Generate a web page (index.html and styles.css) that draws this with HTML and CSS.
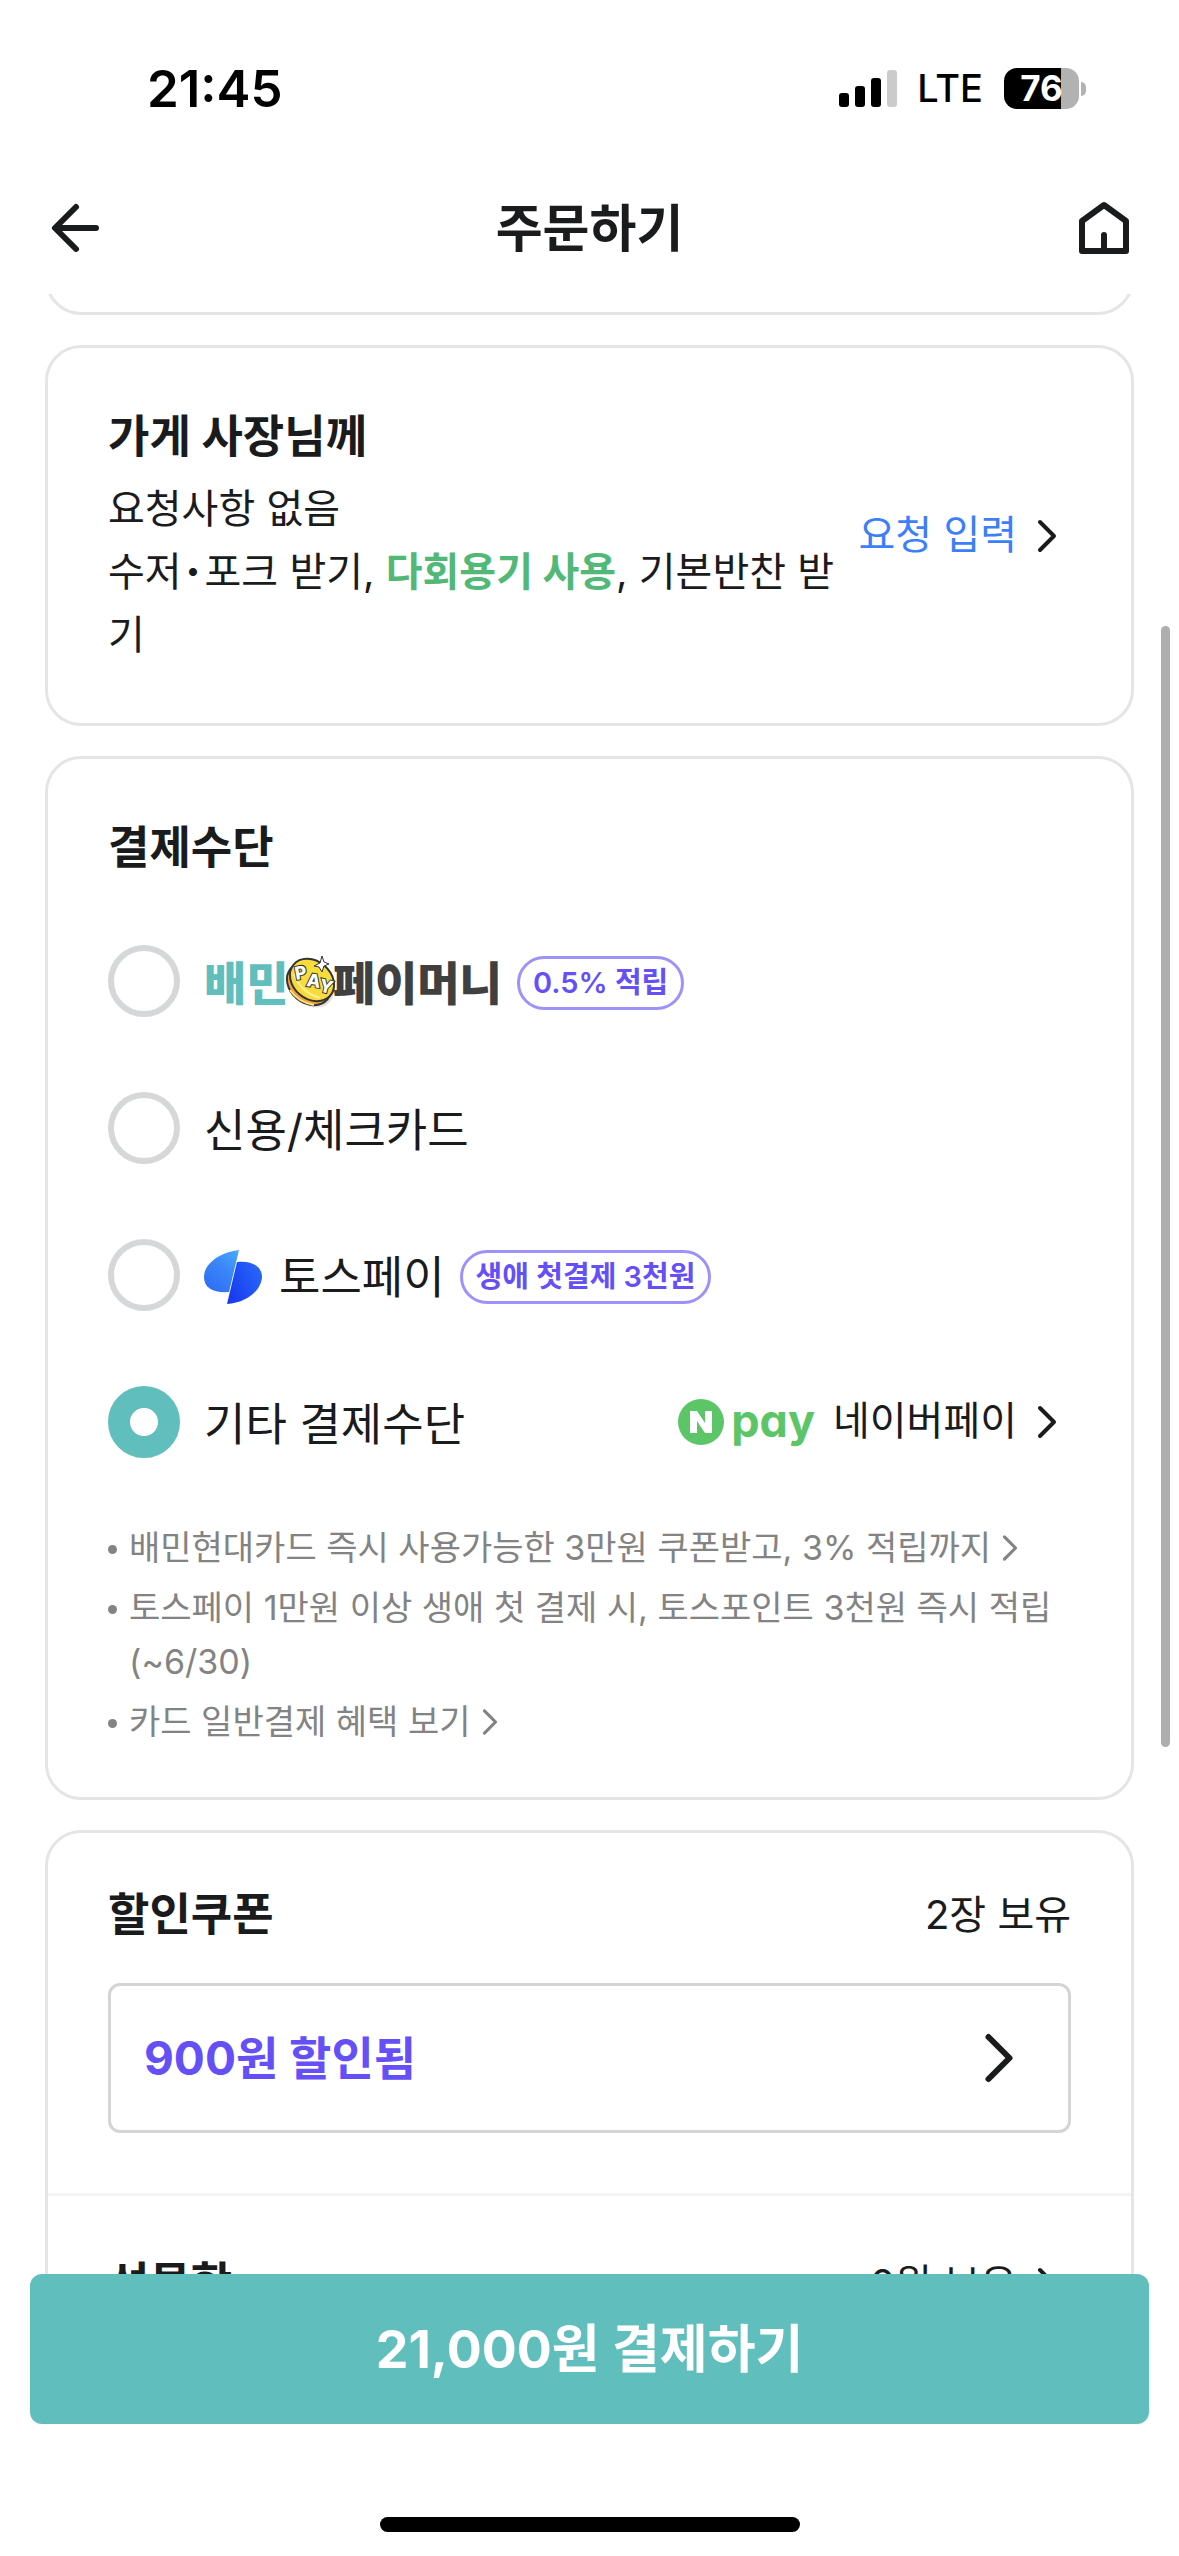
FILE: index.html
```html
<!DOCTYPE html>
<html lang="ko">
<head>
<meta charset="utf-8">
<meta name="viewport" content="width=device-width, initial-scale=1">
<title>주문하기</title>
<link rel="stylesheet" href="styles.css">
</head>
<body>
<svg class="sprite" aria-hidden="true">
  <symbol id="chevron" viewBox="0 0 48 48">
    <path d="M17 10 L31 24 L17 38" fill="none" stroke="currentColor" stroke-width="4" stroke-linecap="round" stroke-linejoin="round"/>
  </symbol>
</svg>
<div class="screen">
  <div class="status-bar">
    <time class="clock">21:45</time>
    <div class="status-icons">
      <svg class="signal" viewBox="0 0 58 38" aria-hidden="true">
        <rect x="0" y="23" width="10" height="14" rx="3"/>
        <rect x="16" y="16" width="10" height="21" rx="3"/>
        <rect x="32" y="8" width="10" height="29" rx="3"/>
        <rect x="48" y="0" width="10" height="37" rx="3" fill="#cbcbcb"/>
      </svg>
      <span class="network">LTE</span>
      <div class="battery"><span class="battery-level">76</span><span class="battery-tip"></span></div>
    </div>
  </div>

  <header class="app-bar">
    <button class="icon-button" type="button" aria-label="뒤로">
      <svg class="icon-nav" viewBox="0 0 54 54" aria-hidden="true">
        <path d="M28 6 L7 27 L28 48 M8 27 H48" fill="none" stroke="currentColor" stroke-width="6" stroke-linecap="round" stroke-linejoin="round"/>
      </svg>
    </button>
    <h1 class="app-title">주문하기</h1>
    <button class="icon-button" type="button" aria-label="홈">
      <svg class="icon-nav" viewBox="0 0 54 54" aria-hidden="true">
        <path d="M5 50 V20 L27 4 L49 20 V50 Z M27 34 V49" fill="none" stroke="currentColor" stroke-width="6" stroke-linecap="round" stroke-linejoin="round"/>
      </svg>
    </button>
  </header>

  <main class="content">
    <section class="card card-previous"></section>

    <section class="card request">
      <div class="request-body">
        <h2 class="card-title">가게 사장님께</h2>
        <p class="request-text">요청사항 없음</p>
        <p>수저<span class="dot">·</span>포크 받기, <strong class="eco">다회용기 사용</strong>, 기본반찬 받기</p>
      </div>
      <a class="request-link" href="#"><span class="blue">요청 입력</span><svg class="icon" aria-hidden="true"><use href="#chevron"/></svg></a>
    </section>

    <section class="card payment">
      <h2 class="card-title">결제수단</h2>
      <div class="methods">
        <div class="method">
          <label class="method-label">
            <input class="radio" type="radio" name="pay">
            <span class="method-name"><span class="baemin"><span class="baemin-mint">배민</span><svg class="coin" viewBox="0 0 52 54" aria-hidden="true">
              <ellipse cx="27" cy="32" rx="22" ry="18" transform="rotate(35 27 32)" fill="#000" opacity=".12"/>
              <ellipse cx="23" cy="28" rx="24" ry="19" transform="rotate(40 23 28)" fill="#f0a03c" stroke="#333" stroke-width="2"/>
              <path d="M4 34 Q12 46 28 49" fill="none" stroke="#ffe27a" stroke-width="2"/>
              <ellipse cx="26" cy="24" rx="24" ry="19" transform="rotate(40 26 24)" fill="#f8dc3c" stroke="#333" stroke-width="2"/>
              <path d="M8 18 Q14 36 34 42" fill="none" stroke="#fff09a" stroke-width="2"/>
              <g class="coin-text">
                <text x="10" y="24" transform="rotate(-10 10 24)">P</text>
                <text x="20" y="30" transform="rotate(8 20 30)">A</text>
                <text x="32" y="35" transform="rotate(14 32 35)">Y</text>
              </g>
              <path d="M36 0 L38 6 L43 8 L38 10 L36 16 L33 11 L28 10 L34 7 Z" fill="#fff" stroke="#333" stroke-width="1"/>
            </svg><span class="baemin-dark">페이머니</span></span>
            <span class="badge">0.5% 적립</span></span>
          </label>
        </div>
        <div class="method">
          <label class="method-label">
            <input class="radio" type="radio" name="pay">
            <span class="method-name">신용/체크카드</span>
          </label>
        </div>
        <div class="method">
          <label class="method-label">
            <input class="radio" type="radio" name="pay">
            <span class="method-name"><span class="toss"><svg class="toss-icon" viewBox="0 0 58 54" aria-hidden="true">
              <defs>
                <linearGradient id="toss-left" x1="1" y1="0" x2=".3" y2="1"><stop offset="0" stop-color="#4aaaff"/><stop offset=".5" stop-color="#3a86f7"/><stop offset="1" stop-color="#2f70f5"/></linearGradient>
                <linearGradient id="toss-right" x1="1" y1="0" x2="0" y2=".6"><stop offset="0" stop-color="#2b6bfa"/><stop offset="1" stop-color="#183df0"/></linearGradient>
              </defs>
              <path d="M33 12 C48 10 58 17 58 27 C57 41 42 53 23 54 Z" fill="url(#toss-right)"/>
              <path d="M35 0 C17 2 0 13 0 27 C0 38 9 43 25 42 Z" fill="url(#toss-left)"/>
            </svg><span>토스페이</span></span>
            <span class="badge">생애 첫결제 3천원</span></span>
          </label>
        </div>
        <div class="method">
          <label class="method-label">
            <input class="radio" type="radio" name="pay" checked>
            <span class="method-name">기타 결제수단</span>
          </label>
          <a class="naver" href="#">
            <span class="npay"><svg class="npay-icon" viewBox="0 0 46 46" aria-hidden="true">
              <circle cx="23" cy="23" r="23" fill="#5bc567"/>
              <path d="M12 12 H19 L27 24 V12 H34 V34 H27 L19 22 V34 H12 Z" fill="#fff"/>
            </svg><span class="npay-word">pay</span></span>
            <span class="naver-name">네이버페이</span>
            <svg class="icon" aria-hidden="true"><use href="#chevron"/></svg>
          </a>
        </div>
      </div>
      <ul class="notes">
        <li><a class="note-link" href="#">배민현대카드 즉시 사용가능한 3만원 쿠폰받고, 3% 적립까지<svg class="icon-small" aria-hidden="true"><use href="#chevron"/></svg></a></li>
        <li>토스페이 1만원 이상 생애 첫 결제 시, 토스포인트 3천원 즉시 적립(~6/30)</li>
        <li><a class="note-link" href="#">카드 일반결제 혜택 보기<svg class="icon-small" aria-hidden="true"><use href="#chevron"/></svg></a></li>
      </ul>
    </section>

    <section class="card benefits">
      <div class="coupon">
        <div class="row">
          <h2 class="card-title">할인쿠폰</h2>
          <span>2장 보유</span>
        </div>
        <button class="coupon-select" type="button">
          <span>900원 할인됨</span>
          <svg class="icon-large" aria-hidden="true"><use href="#chevron"/></svg>
        </button>
      </div>
      <div class="gift row">
        <h2 class="card-title">선물함</h2>
        <a class="gift-link" href="#">0원 보유<svg class="icon" aria-hidden="true"><use href="#chevron"/></svg></a>
      </div>
    </section>
    <div class="scrollbar"></div>
  </main>

  <footer class="bottom-bar">
    <button class="pay-button" type="button">21,000원 결제하기</button>
    <div class="home-indicator"></div>
  </footer>
</div>
</body>
</html>
```
FILE: styles.css
```css
* {
  box-sizing: border-box;
}

body {
  margin: 0;
  background: #fff;
  color: #1a1b1c;
  font-family: Inter, "Noto Sans CJK KR", sans-serif;
  font-size: 40px;
  line-height: 63px;
}

h1, h2, p, ul {
  margin: 0;
  padding: 0;
}

button {
  padding: 0;
  border: 0;
  background: none;
  color: inherit;
  font: inherit;
}

a {
  color: inherit;
  text-decoration: none;
}

svg {
  display: block;
  flex: none;
}

.sprite {
  position: absolute;
  width: 0;
  height: 0;
}

.screen {
  display: flex;
  flex-direction: column;
  height: 100vh;
}

/* Status bar */
.status-bar {
  display: flex;
  flex: none;
  align-items: flex-start;
  justify-content: space-between;
  height: 162px;
  padding: 57px 93px 0 147px;
  color: #000;
}

.clock {
  font-size: 51px;
  font-weight: 600;
}

.status-icons {
  display: flex;
  align-items: center;
  height: 63px;
}

.signal {
  width: 58px;
  height: 38px;
  margin-right: 20px;
}

.network {
  margin-right: 21px;
  font-size: 38px;
  font-weight: 500;
}

.battery {
  display: flex;
  align-items: center;
  gap: 2px;
}

.battery-level {
  width: 75px;
  height: 41px;
  border-radius: 13px;
  background: linear-gradient(to right, #000 76%, #b2b2b2 76%);
  color: #fff;
  font-size: 35px;
  font-weight: 700;
  line-height: 41px;
  text-align: center;
}

.battery-tip {
  width: 5px;
  height: 14px;
  border-radius: 0 5px 5px 0;
  background: #b2b2b2;
}

/* App bar */
.app-bar {
  display: flex;
  flex: none;
  align-items: center;
  justify-content: space-between;
  height: 132px;
  padding: 0 48px;
}

.app-title {
  font-size: 51px;
  font-weight: 700;
}

.icon-nav {
  width: 54px;
  height: 54px;
}

/* Cards */
.content {
  position: relative;
  display: flex;
  flex: 1;
  flex-direction: column;
  gap: 30px;
  min-height: 0;
  padding: 0 45px;
  overflow: hidden;
}

.card {
  flex: none;
  padding: 0 60px;
  border: 3px solid #e4e5e5;
  border-radius: 36px;
}

.card-previous {
  height: 81px;
  margin-top: -60px;
}

.card-title {
  font-size: 45px;
  font-weight: 700;
}

.icon {
  width: 48px;
  height: 48px;
}

.request {
  display: flex;
  align-items: center;
  gap: 12px;
  padding-top: 57px;
  padding-bottom: 57px;
}

.request-body {
  flex: 1;
}

.request-text {
  padding-top: 9px;
}

.dot {
  margin: 0 4px;
  font-weight: 900;
}

.eco {
  color: #52b878;
  font-weight: 700;
}

.request-link,
.gift-link {
  display: flex;
  align-items: center;
  gap: 6px;
}

.blue {
  padding-bottom: 3px;
  color: #3c7ffa;
}

/* Payment methods */
.payment {
  padding-top: 57px;
  padding-bottom: 48px;
}

.methods {
  display: flex;
  flex-direction: column;
  gap: 75px;
  padding-top: 66px;
}

.method {
  display: flex;
  align-items: center;
  justify-content: space-between;
}

.method-label {
  display: flex;
  align-items: center;
  font-size: 45px;
}

.method-name {
  display: flex;
  align-items: center;
  padding-top: 4px;
}

.radio {
  appearance: none;
  flex: none;
  width: 72px;
  height: 72px;
  margin: 0 24px 0 0;
  border: 6px solid #d5d7d9;
  border-radius: 50%;
  background: #fff;
}

.radio:checked {
  border: 22px solid #60bebd;
}

.baemin,
.toss,
.npay {
  display: flex;
  align-items: center;
}

.baemin {
  font-size: 46px;
  font-weight: 900;
}

.baemin-mint {
  color: #60bebd;
}

.baemin-dark {
  color: #404040;
}

.coin {
  position: relative;
  width: 52px;
  height: 54px;
  margin: 0 -5px 0 -3px;
  overflow: visible;
}

.coin-text {
  fill: #fff;
  stroke: #333;
  stroke-width: 2px;
  paint-order: stroke;
  font-size: 18px;
  font-weight: 800;
}

.badge {
  margin-left: 15px;
  padding: 0 13px;
  border: 3px solid #9c92fa;
  border-radius: 27px;
  color: #6450f6;
  font-size: 29px;
  font-weight: 600;
  line-height: 48px;
}

.toss {
  gap: 17px;
}

.toss-icon {
  width: 58px;
  height: 54px;
}

.naver {
  display: flex;
  align-items: center;
}

.npay {
  gap: 7px;
}

.npay-icon {
  width: 46px;
  height: 46px;
}

.npay-word {
  padding-bottom: 3px;
  color: #5bc567;
  font-size: 45px;
  font-weight: 700;
  line-height: 60px;
  font-feature-settings: "cv11";
}

.naver-name {
  margin: 0 6px 0 18px;
  padding-bottom: 3px;
}

.notes {
  display: flex;
  flex-direction: column;
  gap: 6px;
  padding-top: 63px;
  color: #838383;
  font-size: 34px;
  line-height: 54px;
  list-style: none;
}

.notes li {
  display: flex;
  gap: 12px;
}

.notes li::before {
  flex: none;
  width: 9px;
  height: 9px;
  margin-top: 24px;
  border-radius: 50%;
  background: #838383;
  content: "";
}

.note-link {
  display: flex;
  align-items: center;
}

.icon-small {
  width: 38px;
  height: 38px;
}

/* Coupon and gifts */
.benefits {
  padding: 0;
}

.row {
  display: flex;
  align-items: center;
  justify-content: space-between;
}

.coupon {
  padding: 50px 60px 60px;
}

.coupon-select {
  display: flex;
  align-items: center;
  justify-content: space-between;
  width: 100%;
  height: 150px;
  margin-top: 37px;
  padding: 0 33px;
  border: 3px solid #d4d4d4;
  border-radius: 12px;
  color: #6450f6;
  font-size: 46px;
  font-weight: 700;
}

.icon-large {
  width: 72px;
  height: 72px;
  color: #1a1b1c;
}

.gift {
  padding: 56px 60px 60px;
  border-top: 3px solid #f3f3f3;
}

.scrollbar {
  position: absolute;
  top: 332px;
  right: 9px;
  width: 9px;
  height: 1121px;
  border-radius: 5px;
  background: #aeaeae;
}

/* Bottom bar */
.bottom-bar {
  display: flex;
  flex: none;
  flex-direction: column;
  align-items: center;
  gap: 93px;
  padding: 0 30px 24px;
}

.pay-button {
  width: 100%;
  height: 150px;
  border-radius: 12px;
  background: #60bebd;
  color: #fff;
  font-size: 52px;
  font-weight: 700;
}

.home-indicator {
  width: 420px;
  height: 15px;
  border-radius: 8px;
  background: #000;
}
```
